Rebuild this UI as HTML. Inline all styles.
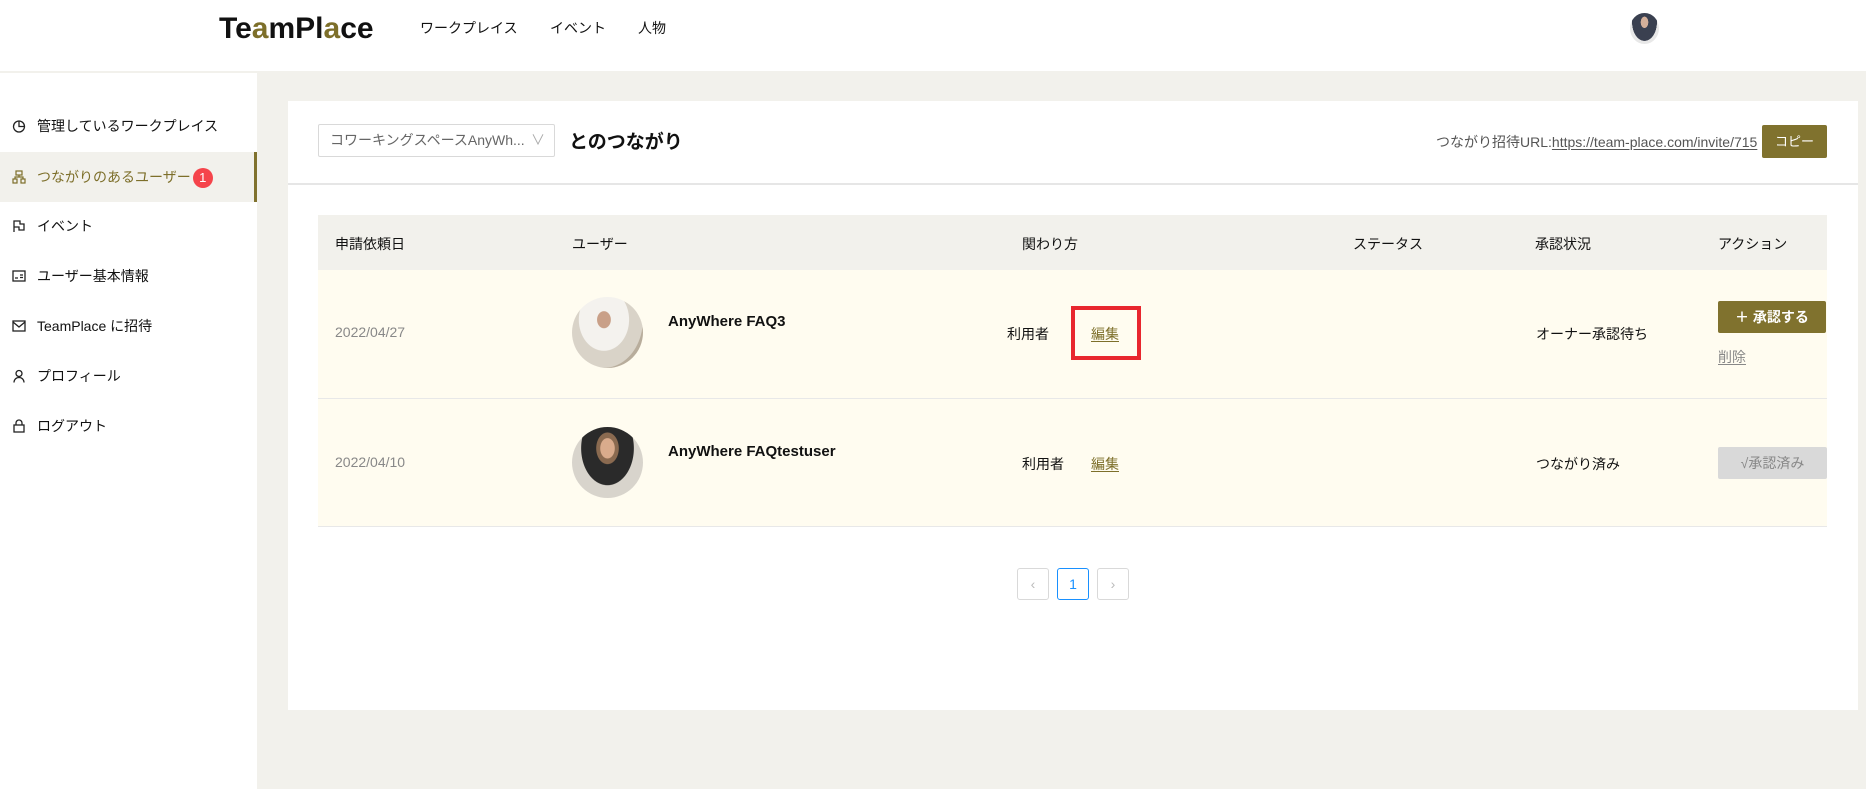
<!DOCTYPE html>
<html><head><meta charset="utf-8"><style>
*{margin:0;padding:0;box-sizing:border-box}
body{width:1866px;height:789px;background:#f2f1ec;font-family:"Liberation Sans","Noto Sans CJK JP",sans-serif;color:#111;position:relative;overflow:hidden;font-size:14px}
.a{position:absolute;white-space:nowrap}
.hdr{left:0;top:0;width:1866px;height:71px;background:#fff}
.side{left:0;top:73px;width:257px;height:716px;background:#fff}
.it{left:0;width:257px;height:50px;line-height:50px;padding-left:37px;font-size:14px}
.ic{position:absolute;left:12px;top:18px;width:14px;height:14px}
.card{left:288px;top:101px;width:1570px;height:609px;background:#fff}
.gold{background:#80722e;color:#fff}
.row{left:318px;width:1509px;background:#fffcf0;border-bottom:1px solid #e8e8e8}
.av{border-radius:50%;overflow:hidden;background:#d9d2c6}
u{text-underline-offset:2px}
.pg{width:32px;height:32px;border:1px solid #d9d9d9;border-radius:3px;background:#fff;text-align:center;line-height:30px;color:#bbb;font-size:14px}
</style></head><body>
<div class="a hdr"></div>
<div class="a" style="left:219px;top:12px;font-size:30px;font-weight:bold;letter-spacing:0px;color:#111">Te<span style="color:#7d6f2a">a</span>mPl<span style="color:#7d6f2a">a</span>ce</div>
<div class="a" style="left:420px;top:18px;font-size:14px">ワークプレイス</div>
<div class="a" style="left:550px;top:18px;font-size:14px">イベント</div>
<div class="a" style="left:638px;top:18px;font-size:14px">人物</div>
<div class="a av" style="left:1630px;top:13px;width:29px;height:31px;background:radial-gradient(ellipse at 50% 30%,#d4b09a 0 18%,#3a4050 19% 60%,#e8e8e8 61%)"></div>

<div class="a side"></div>
<div class="a it" style="top:101px"><svg class="ic" viewBox="0 0 14 14" fill="none" stroke="#222" stroke-width="1.3"><circle cx="7" cy="7.5" r="5.5"/><path d="M7 2v5.5h5.5"/></svg>管理しているワークプレイス</div>
<div class="a it" style="top:152px;background:#f2f1ec;color:#7d6f2a;border-right:3px solid #80722e"><svg class="ic" viewBox="0 0 14 14" fill="none" stroke="#7d6f2a" stroke-width="1.2"><rect x="4" y="1" width="6" height="4"/><rect x="1" y="9" width="4" height="4"/><rect x="9" y="9" width="4" height="4"/><path d="M7 5v2M3 9V7h8v2"/></svg>つながりのあるユーザー<span style="display:inline-block;width:20px;height:20px;border-radius:50%;background:#f5444b;color:#fff;font-size:13px;line-height:20px;text-align:center;vertical-align:middle;margin-left:2px">1</span></div>
<div class="a it" style="top:201px"><svg class="ic" viewBox="0 0 14 14" fill="none" stroke="#222" stroke-width="1.3"><path d="M2 13V2h6v3h4v6H7V8H2"/></svg>イベント</div>
<div class="a it" style="top:251px"><svg class="ic" viewBox="0 0 14 14" fill="none" stroke="#222" stroke-width="1.3"><rect x="1" y="2" width="12" height="10"/><path d="M3 9h3M8 6h3M8 8.5h3"/></svg>ユーザー基本情報</div>
<div class="a it" style="top:301px"><svg class="ic" viewBox="0 0 14 14" fill="none" stroke="#222" stroke-width="1.3"><rect x="1" y="2" width="12" height="10"/><path d="M1 3l6 5 6-5"/></svg>TeamPlace に招待</div>
<div class="a it" style="top:351px"><svg class="ic" viewBox="0 0 14 14" fill="none" stroke="#222" stroke-width="1.3"><circle cx="7" cy="4.5" r="3"/><path d="M2 13.5c0-3 2.2-5 5-5s5 2 5 5"/></svg>プロフィール</div>
<div class="a it" style="top:401px"><svg class="ic" viewBox="0 0 14 14" fill="none" stroke="#222" stroke-width="1.3"><rect x="2" y="6" width="10" height="7"/><path d="M4 6V4a3 3 0 0 1 6 0v2"/></svg>ログアウト</div>

<div class="a card"></div>
<div class="a" style="left:288px;top:183px;width:1570px;height:2px;background:#e6e6e6"></div>
<div class="a" style="left:318px;top:124px;width:237px;height:33px;border:1px solid #d9d9d9;border-radius:2px;padding-left:11px;line-height:31px;color:#666;font-size:14px">コワーキングスペースAnyWh...<span style="position:absolute;right:9px;top:0;color:#aaa">∨</span></div>
<div class="a" style="left:569px;top:127px;font-size:19px;font-weight:bold">とのつながり</div>
<div class="a" style="left:1436px;top:132px;font-size:14px;color:#555;width:320px;text-align:right">つながり招待URL:<u>https://team-place.com/invite/715</u></div>
<div class="a gold" style="left:1762px;top:125px;width:65px;height:33px;line-height:33px;text-align:center;font-size:13px;border-radius:2px">コピー</div>

<div class="a" style="left:318px;top:215px;width:1509px;height:55px;background:#f2f1ec"></div>
<div class="a" style="left:335px;top:234px">申請依頼日</div>
<div class="a" style="left:572px;top:234px">ユーザー</div>
<div class="a" style="left:1022px;top:234px">関わり方</div>
<div class="a" style="left:1353px;top:234px">ステータス</div>
<div class="a" style="left:1535px;top:234px">承認状況</div>
<div class="a" style="left:1718px;top:234px">アクション</div>

<div class="a row" style="top:270px;height:129px"></div>
<div class="a" style="left:335px;top:324px;color:#888;font-size:14px">2022/04/27</div>
<div class="a av" style="left:572px;top:297px;width:71px;height:71px;background:radial-gradient(ellipse at 45% 32%,#c9a088 0 12%,#f4f2ee 13% 45%,#d9d3c8 46% 70%,#b8ad9c 71%)"></div>
<div class="a" style="left:668px;top:313px;font-weight:bold;font-size:15px">AnyWhere FAQ3</div>
<div class="a" style="left:1007px;top:324px">利用者</div>
<div class="a" style="left:1091px;top:324px;color:#7d6f2a"><u>編集</u></div>
<div class="a" style="left:1071px;top:306px;width:70px;height:54px;border:4px solid #e8262e"></div>
<div class="a" style="left:1536px;top:324px">オーナー承認待ち</div>
<div class="a gold" style="left:1718px;top:301px;width:108px;height:32px;line-height:32px;text-align:center;font-size:14px;border-radius:2px;font-weight:bold">＋ 承認する</div>
<div class="a" style="left:1718px;top:347px;font-size:14px;color:#888"><u>削除</u></div>

<div class="a row" style="top:399px;height:128px"></div>
<div class="a" style="left:335px;top:454px;color:#888;font-size:14px">2022/04/10</div>
<div class="a av" style="left:572px;top:427px;width:71px;height:71px;background:radial-gradient(ellipse at 50% 30%,#d9ab8c 0 14%,#8a6a50 15% 22%,#2a2a2a 23% 52%,#d8d4cc 53%)"></div>
<div class="a" style="left:668px;top:443px;font-weight:bold;font-size:15px">AnyWhere FAQtestuser</div>
<div class="a" style="left:1022px;top:454px">利用者</div>
<div class="a" style="left:1091px;top:454px;color:#7d6f2a"><u>編集</u></div>
<div class="a" style="left:1536px;top:454px">つながり済み</div>
<div class="a" style="left:1718px;top:447px;width:109px;height:32px;line-height:32px;text-align:center;font-size:14px;border-radius:2px;background:#d9d9d9;color:#888">√承認済み</div>

<div class="a pg" style="left:1017px;top:568px">‹</div>
<div class="a pg" style="left:1057px;top:568px;border-color:#1890ff;color:#1890ff">1</div>
<div class="a pg" style="left:1097px;top:568px">›</div>
</body></html>
